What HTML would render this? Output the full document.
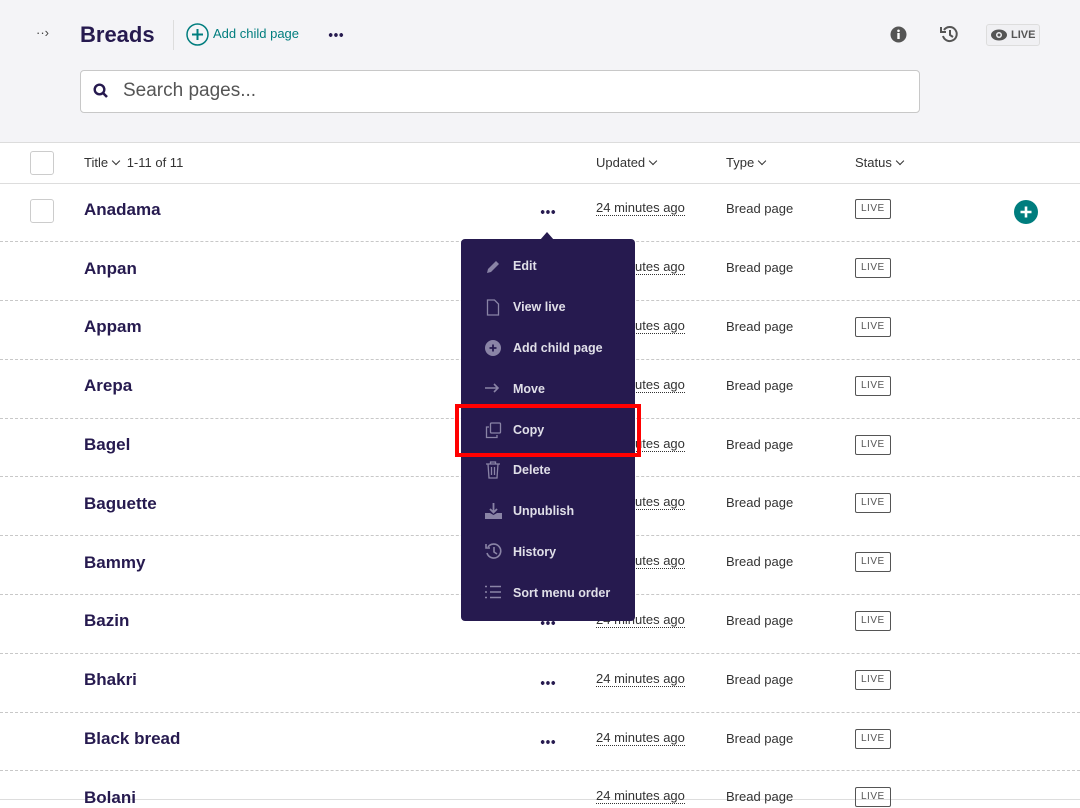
<!DOCTYPE html>
<html><head><meta charset="utf-8"><style>
*{box-sizing:border-box;margin:0;padding:0}
body{width:1080px;height:800px;overflow:hidden;background:#fff;font-family:"Liberation Sans",sans-serif;position:relative;color:#262626}
.top{position:absolute;left:0;top:0;width:1080px;height:143px;background:#f4f4f7;border-bottom:1px solid #dcdcdc}
.abs{position:absolute}
.row{position:absolute;left:0;width:1080px;height:58.8px;border-bottom:1px dashed #c8c8c8}
.t{position:absolute;left:84px;font-weight:bold;font-size:17px;color:#261a4f}
.dots{position:absolute;left:540px;width:16px;height:4px;background:radial-gradient(circle,#261a4f 1.8px,transparent 2px) 0 0/5.3px 4px repeat-x}
.up{position:absolute;left:596px;font-size:13px;color:#333;border-bottom:1px dotted #333;line-height:14px}
.ty{position:absolute;left:726px;font-size:13px;color:#333}
.live{position:absolute;left:855px;font-size:10px;color:#555;border:1px solid #555;border-radius:2px;padding:3px 5px;letter-spacing:.5px;line-height:12px}
.cb{position:absolute;left:30px;width:24px;height:24px;border:1px solid #ccc;border-radius:3px;background:#fff}
.menu{position:absolute;left:461px;top:239px;width:174px;height:382px;background:#261a4f;border-radius:4px}
.mi{position:absolute;left:52px;color:#e0dfe8;font-weight:bold;font-size:12.5px}
.ic{position:absolute;left:24px}
.chev{display:inline-block;width:6px;height:6px;border-right:1.3px solid #333;border-bottom:1.3px solid #333;transform:rotate(45deg);margin:0 4px 3px 5px}
</style></head><body>
<div class="top"></div>
<div class="abs" style="left:36px;top:25px;font-size:13px;color:#444">··›</div>
<div class="abs" style="left:80px;top:22px;font-size:22px;font-weight:bold;color:#261a4f">Breads</div>
<div class="abs" style="left:173px;top:20px;width:1px;height:30px;background:#ddd"></div>
<svg class="abs" style="left:186px;top:23px" width="23" height="23"><circle cx="11.5" cy="11.5" r="10.5" fill="none" stroke="#007d7e" stroke-width="1.5"/><path d="M11.5 6v11M6 11.5h11" stroke="#007d7e" stroke-width="2"/></svg>
<div class="abs" style="left:213px;top:26px;font-size:13px;color:#007d7e">Add child page</div>
<div class="dots" style="left:328px;top:33px"></div>
<svg class="abs" style="left:890px;top:26px" width="17" height="17"><circle cx="8.5" cy="8.5" r="8" fill="#555"/><rect x="7.3" y="7" width="2.4" height="6" fill="#fff"/><circle cx="8.5" cy="4.8" r="1.3" fill="#fff"/></svg>
<svg class="abs" style="left:940px;top:25px" width="19" height="19"><path d="M4 5 A7 7 0 1 1 3 11" fill="none" stroke="#555" stroke-width="2"/><path d="M1 2v5h5" fill="none" stroke="#555" stroke-width="2"/><path d="M10 5v5l3 2" fill="none" stroke="#555" stroke-width="2"/></svg>
<div class="abs" style="left:986px;top:24px;width:54px;height:22px;border:1px solid #ddd;border-radius:3px;background:#f0f0f3"></div>
<svg class="abs" style="left:990px;top:29px" width="18" height="12"><ellipse cx="9" cy="6" rx="8" ry="5.5" fill="#555"/><circle cx="9" cy="6" r="3" fill="#f0f0f3"/><circle cx="9" cy="6" r="1.5" fill="#555"/></svg>
<div class="abs" style="left:1011px;top:29px;font-size:11px;color:#555;font-weight:bold">LIVE</div>
<div class="abs" style="left:80px;top:70px;width:840px;height:43px;background:#fff;border:1px solid #c8c8c8;border-radius:4px"></div>
<svg class="abs" style="left:93px;top:83px" width="16" height="16"><circle cx="6.5" cy="6.5" r="4.8" fill="none" stroke="#261a4f" stroke-width="2.4"/><path d="M10 10l4 4" stroke="#261a4f" stroke-width="2.6"/></svg>
<div class="abs" style="left:123px;top:80px;font-size:19px;color:#555">Search pages...</div>
<div class="abs" style="left:0;top:143px;width:1080px;height:41px;border-bottom:1px solid #ddd"></div>
<div class="cb" style="top:151px"></div>
<div class="abs" style="left:84px;top:155px;font-size:13px;color:#333">Title<span class="chev"></span> 1-11 of 11</div>
<div class="abs" style="left:596px;top:155px;font-size:13px;color:#333">Updated<span class="chev"></span></div>
<div class="abs" style="left:726px;top:155px;font-size:13px;color:#333">Type<span class="chev"></span></div>
<div class="abs" style="left:855px;top:155px;font-size:13px;color:#333">Status<span class="chev"></span></div>

<div class="row" style="top:183.5px"></div><div class="row" style="top:242.3px"></div><div class="row" style="top:301.1px"></div><div class="row" style="top:359.9px"></div><div class="row" style="top:418.7px"></div><div class="row" style="top:477.5px"></div><div class="row" style="top:536.3px"></div><div class="row" style="top:595.1px"></div><div class="row" style="top:653.9px"></div><div class="row" style="top:712.7px"></div>
<div class="abs" style="left:0;top:799px;width:1080px;height:1px;background:#ddd"></div>
<div class="cb" style="top:199px"></div>
<svg class="abs" style="left:1014px;top:200px" width="24" height="24"><circle cx="12" cy="12" r="12" fill="#007d7e"/><path d="M12 6.5v11M6.5 12h11" stroke="#fff" stroke-width="2.6"/></svg>

<div class="t" style="top:200px">Anadama</div><div class="t" style="top:259px">Anpan</div><div class="t" style="top:317px">Appam</div><div class="t" style="top:376px">Arepa</div><div class="t" style="top:435px">Bagel</div><div class="t" style="top:494px">Baguette</div><div class="t" style="top:553px">Bammy</div><div class="t" style="top:611px">Bazin</div><div class="t" style="top:670px">Bhakri</div><div class="t" style="top:729px">Black bread</div><div class="t" style="top:788px">Bolani</div>
<div class="dots" style="top:210px"></div><div class="dots" style="top:621px"></div><div class="dots" style="top:681px"></div><div class="dots" style="top:740px"></div>
<div class="up" style="top:201px">24 minutes ago</div><div class="up" style="top:260px">24 minutes ago</div><div class="up" style="top:319px">24 minutes ago</div><div class="up" style="top:378px">24 minutes ago</div><div class="up" style="top:437px">24 minutes ago</div><div class="up" style="top:495px">24 minutes ago</div><div class="up" style="top:554px">24 minutes ago</div><div class="up" style="top:613px">24 minutes ago</div><div class="up" style="top:672px">24 minutes ago</div><div class="up" style="top:731px">24 minutes ago</div><div class="up" style="top:789px">24 minutes ago</div>
<div class="ty" style="top:201px">Bread page</div><div class="ty" style="top:260px">Bread page</div><div class="ty" style="top:319px">Bread page</div><div class="ty" style="top:378px">Bread page</div><div class="ty" style="top:437px">Bread page</div><div class="ty" style="top:495px">Bread page</div><div class="ty" style="top:554px">Bread page</div><div class="ty" style="top:613px">Bread page</div><div class="ty" style="top:672px">Bread page</div><div class="ty" style="top:731px">Bread page</div><div class="ty" style="top:789px">Bread page</div>
<div class="live" style="top:199px">LIVE</div><div class="live" style="top:258px">LIVE</div><div class="live" style="top:317px">LIVE</div><div class="live" style="top:376px">LIVE</div><div class="live" style="top:435px">LIVE</div><div class="live" style="top:493px">LIVE</div><div class="live" style="top:552px">LIVE</div><div class="live" style="top:611px">LIVE</div><div class="live" style="top:670px">LIVE</div><div class="live" style="top:729px">LIVE</div><div class="live" style="top:787px">LIVE</div>

<div class="abs" style="left:540px;top:232px;width:0;height:0;border-left:7px solid transparent;border-right:7px solid transparent;border-bottom:8px solid #261a4f"></div>
<div class="menu">
<svg class="ic" style="top:20px" width="16" height="16"><path d="M2 14l1-4 8-8 3 3-8 8z" fill="#8a84a6"/></svg><div class="mi" style="top:20px">Edit</div>
<svg class="ic" style="top:60px" width="16" height="17"><path d="M2.5 1h7l4 4v11h-11z" fill="none" stroke="#8a84a6" stroke-width="1.3"/></svg><div class="mi" style="top:61px">View live</div>
<svg class="ic" style="top:101px" width="16" height="16"><circle cx="8" cy="8" r="8" fill="#8a84a6"/><path d="M8 4.5v7M4.5 8h7" stroke="#261a4f" stroke-width="1.8"/></svg><div class="mi" style="top:102px">Add child page</div>
<svg class="ic" style="top:143px" width="16" height="12"><path d="M0 6h13M9 2l4 4-4 4" fill="none" stroke="#8a84a6" stroke-width="1.6"/></svg><div class="mi" style="top:143px">Move</div>
<svg class="ic" style="top:183px" width="17" height="17"><rect x="5.5" y="1" width="10" height="10" rx="1" fill="none" stroke="#8a84a6" stroke-width="1.3"/><path d="M4 5H1.5v10.5H12V13" fill="none" stroke="#8a84a6" stroke-width="1.3"/></svg><div class="mi" style="top:184px">Copy</div>
<svg class="ic" style="top:222px" width="16" height="18"><path d="M1 3h14M5.5 3V1h5v2M3 3l1 14h8l1-14M6.5 6v8M9.5 6v8" fill="none" stroke="#8a84a6" stroke-width="1.3"/></svg><div class="mi" style="top:224px">Delete</div>
<svg class="ic" style="top:263px" width="17" height="17"><path d="M8.5 1v9M5 7l3.5 3.5L12 7" fill="none" stroke="#8a84a6" stroke-width="1.8"/><path d="M0 11h5l3.5 2 3.5-2h5v6H0z" fill="#8a84a6"/></svg><div class="mi" style="top:265px">Unpublish</div>
<svg class="ic" style="top:304px" width="17" height="17"><path d="M3 4A7 7 0 1 1 2 10" fill="none" stroke="#8a84a6" stroke-width="1.6"/><path d="M1 1v4h4" fill="none" stroke="#8a84a6" stroke-width="1.6"/><path d="M9 4v5l3 2" fill="none" stroke="#8a84a6" stroke-width="1.6"/></svg><div class="mi" style="top:306px">History</div>
<svg class="ic" style="top:346px" width="16" height="14"><path d="M0 1.5h2M0 7h2M0 12.5h2M5 1.5h11M5 7h11M5 12.5h11" stroke="#8a84a6" stroke-width="1.6"/></svg><div class="mi" style="top:347px">Sort menu order</div>
</div>
<div class="abs" style="left:455px;top:404px;width:186px;height:53px;border:4px solid #f00"></div>
</body></html>
